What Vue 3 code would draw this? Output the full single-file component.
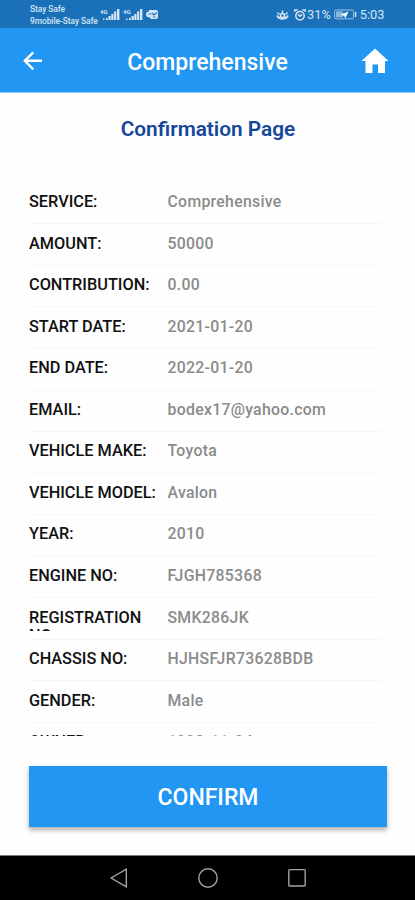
<template>
  <div class="screen">
    <!-- status bar -->
    <div class="status-bar">
      <div class="carriers">
        <span>Stay Safe</span>
        <span>9mobile-Stay Safe</span>
      </div>
      <svg class="signals" width="60" height="16" viewBox="0 0 60 16" fill="#d3e5f5">
        <g v-for="x in [0, 23]" :key="x" :transform="`translate(${x} 0)`">
          <text x="0" y="7.500" class="network">4G</text>
          <path d="M3 12.500h1.500V14H3zM6 12h1.800v2H6zM8.500 10h2.200v4H8.500zM11.300 8h2.200v6h-2.200zM14.100 5.500h2.200V14h-2.200zM17 3h2.400v11H17z" />
        </g>
        <path d="M49 4h7q2 0 2 2v5q0 2-2 2h-4.500q-1 0-1.500-1.500-4 0-4-3T49 5.500z" />
        <path d="M48.500 8h3M52 7l2 2 3-2.500M53 11h2.500" fill="none" stroke="#1b71b9" stroke-width="1.100" />
      </svg>
      <div class="status-right">
        <svg width="13" height="12" viewBox="0 0 13 12" fill="none" stroke="#d3e5f5" stroke-width="1.500">
          <path d="M.8 6.500c3 4.600 8.400 4.600 11.400 0M1.500 3.500l2 2M6.500 1.500v3M11.500 3.500l-2 2M2 9.500l2-1.500M11 9.500L9 8" />
          <circle cx="6.500" cy="6.500" r="2" />
        </svg>
        <svg class="alarm" width="12" height="12" viewBox="0 0 12 12" fill="none" stroke="#d3e5f5" stroke-width="1.500">
          <circle cx="6" cy="6.800" r="4.200" />
          <path d="M.7 2.800V1h3M11.300 2.800V1h-3M4 5.200l2 2 2.200-1.700" />
        </svg>
        <span class="percent">31%</span>
        <svg class="battery" width="23" height="11" viewBox="0 0 23 11">
          <rect x=".6" y="1" width="19" height="8.800" rx="1.500" fill="none" stroke="#9dc3e4" />
          <rect x="2" y="2.500" width="7" height="5.800" fill="#8bb8df" />
          <path d="M7 5.500l7.500-3-3 6.500-1.500-2z" fill="#fff" />
          <path d="M21.600 3v5" stroke="#d3e5f5" stroke-width="1.400" />
        </svg>
        <span class="clock">5:03</span>
      </div>
    </div>

    <!-- app bar -->
    <header class="app-bar">
      <svg class="back" width="20" height="20" viewBox="0 0 20 20" fill="none" stroke="#fff" stroke-width="2.400">
        <path d="M10.300 1.300L1.800 9.800l8.500 8.500M2 9.800h17" />
      </svg>
      <h1>Comprehensive</h1>
      <svg class="home" width="28" height="26" viewBox="0 0 28 26" fill="#fff">
        <path d="M14 .5L27.500 13H24v12h-7v-8.500h-5.500V25H4.500V13H.5z" />
      </svg>
    </header>

    <main class="content">
      <h2>Confirmation Page</h2>
      <div class="list">
        <div v-for="row in rows" :key="row.label" class="row">
          <div class="label">{{ row.label }}</div>
          <div class="value">{{ row.value }}</div>
        </div>
      </div>
      <button class="confirm">CONFIRM</button>
    </main>

    <!-- system navigation -->
    <nav class="nav-bar">
      <svg width="20" height="22" viewBox="0 0 20 22">
        <path d="M17.300 2.200v17.600L2.200 11z" />
      </svg>
      <svg width="22" height="22" viewBox="0 0 22 22">
        <circle cx="11" cy="11" r="9.200" />
      </svg>
      <svg width="20" height="22" viewBox="0 0 20 22">
        <rect x="1.800" y="2.600" width="16.400" height="16.400" rx=".8" />
      </svg>
    </nav>
  </div>
</template>

<script setup>
import { ref } from 'vue'

const rows = ref([
  { label: 'SERVICE:', value: 'Comprehensive' },
  { label: 'AMOUNT:', value: '50000' },
  { label: 'CONTRIBUTION:', value: '0.00' },
  { label: 'START DATE:', value: '2021-01-20' },
  { label: 'END DATE:', value: '2022-01-20' },
  { label: 'EMAIL:', value: 'bodex17@yahoo.com' },
  { label: 'VEHICLE MAKE:', value: 'Toyota' },
  { label: 'VEHICLE MODEL:', value: 'Avalon' },
  { label: 'YEAR:', value: '2010' },
  { label: 'ENGINE NO:', value: 'FJGH785368' },
  { label: 'REGISTRATION NO:', value: 'SMK286JK' },
  { label: 'CHASSIS NO:', value: 'HJHSFJR73628BDB' },
  { label: 'GENDER:', value: 'Male' },
  { label: 'OWNER:', value: '1990-11-24' }
])
</script>

<style>
body {
  background: #fefefe;
}
</style>

<style scoped>
.screen {
  display: flex;
  flex-direction: column;
  width: 415px;
  height: 900px;
  overflow: hidden;
  background: #fefefe;
  font-family: Roboto, "Liberation Sans", sans-serif;
}

.status-bar {
  display: flex;
  align-items: center;
  flex: none;
  height: 28px;
  padding-left: 30px;
  background: #1b71b9;
  color: #d3e5f5;
}

.carriers {
  display: flex;
  flex-direction: column;
  width: 69px;
  padding-top: 2px;
  font-size: 8.4px;
  font-weight: 500;
  letter-spacing: -0.05px;
  line-height: 12px;
  white-space: nowrap;
}

.signals {
  margin-left: 1px;
}

.network {
  font-size: 6px;
  font-weight: 700;
}

.status-right {
  display: flex;
  align-items: center;
  margin-left: 116px;
  padding-top: 1px;
  font-size: 12.8px;
}

.alarm {
  margin-left: 5px;
}

.percent {
  margin-left: 1px;
}

.battery {
  margin-left: 3px;
}

.clock {
  margin-left: 3px;
}

.app-bar {
  display: flex;
  align-items: center;
  justify-content: space-between;
  flex: none;
  box-sizing: border-box;
  height: 65px;
  padding: 2px 26px 0 23px;
  border-bottom: 1px solid #8cc7f8;
  background: #2196f3;
  color: #fff;
}

.app-bar h1 {
  margin: 2px 0 0 11px;
  font-size: 23px;
  font-weight: 500;
}

.content {
  display: flex;
  flex-direction: column;
  flex: 1;
  min-height: 0;
  padding: 0 28px 0 29px;
}

.content h2 {
  margin: 23px 0 0;
  color: #17479a;
  font-size: 20.8px;
  font-weight: 600;
  line-height: 26px;
  text-align: center;
}

.list {
  height: 553.6px;
  margin-top: 40.8px;
  padding-right: 5px;
  overflow: hidden;
}

.row {
  display: flex;
  box-sizing: border-box;
  height: 41.55px;
  padding-top: 10.3px;
  border-bottom: 1px solid #f7f7f7;
}

.label,
.value {
  height: 22.3px;
  overflow: hidden;
  font-weight: 500;
  line-height: 18px;
}

.label {
  width: 138.5px;
  color: #111;
  font-size: 16.3px;
}

.value {
  color: #8b8b8b;
  font-size: 15.8px;
  letter-spacing: 0.3px;
}

.confirm {
  flex: none;
  height: 61px;
  margin: 29.3px 0 0;
  padding: 2px 0 0;
  border: none;
  background: #2196f3;
  box-shadow: 0 3px 5px rgba(0, 0, 0, 0.32);
  color: #fff;
  font-family: inherit;
  font-size: 23px;
  font-weight: 500;
}

.nav-bar {
  display: flex;
  align-items: center;
  justify-content: center;
  gap: 68px;
  flex: none;
  box-sizing: border-box;
  height: 45px;
  border-top: 1px solid #777;
  background: #000;
}

.nav-bar svg {
  fill: none;
  stroke: #a2a2a2;
  stroke-width: 1.4;
}
</style>
